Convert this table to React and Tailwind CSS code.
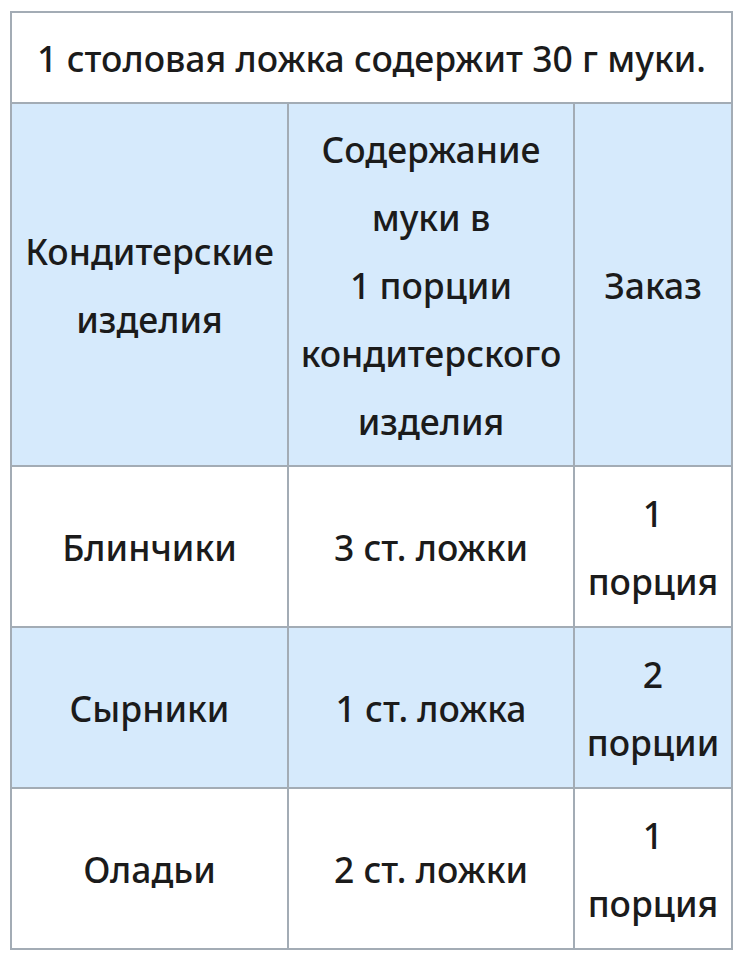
import React from 'react';

const rows = [
  { name: 'Блинчики', flour: '3 ст. ложки', order: ['1', 'порция'], bg: 'bg-white' },
  { name: 'Сырники', flour: '1 ст. ложка', order: ['2', 'порции'], bg: 'bg-[#d6eafc]' },
  { name: 'Оладьи', flour: '2 ст. ложки', order: ['1', 'порция'], bg: 'bg-white' },
];

const cell = 'border-2 border-[#a3acb5] text-center align-middle p-0';

export default function App() {
  return (
    <div className="w-[740px] h-[959px] bg-white pt-[11px] pl-[10px]" style={{ fontFamily: '"Noto Sans", "Open Sans", sans-serif' }}>
      <table className="border-collapse w-[721px] text-[#1b1b1b] text-[35.5px] font-medium leading-[68px] table-fixed">
        <colgroup>
          <col className="w-[277px]" />
          <col className="w-[286px]" />
          <col className="w-[158px]" />
        </colgroup>
        <tbody>
          <tr className="h-[91px] bg-white">
            <td colSpan={3} className={cell}>1 столовая ложка содержит 30 г муки.</td>
          </tr>
          <tr className="h-[363px] bg-[#d6eafc]">
            <td className={cell}>Кондитерские<br />изделия</td>
            <td className={cell}>Содержание<br />муки в<br />1 порции<br />кондитерского<br />изделия</td>
            <td className={cell}>Заказ</td>
          </tr>
          {rows.map((r) => (
            <tr key={r.name} className={`h-[161px] ${r.bg}`}>
              <td className={cell}>{r.name}</td>
              <td className={cell}>{r.flour}</td>
              <td className={cell}>{r.order[0]}<br />{r.order[1]}</td>
            </tr>
          ))}
        </tbody>
      </table>
    </div>
  );
}
